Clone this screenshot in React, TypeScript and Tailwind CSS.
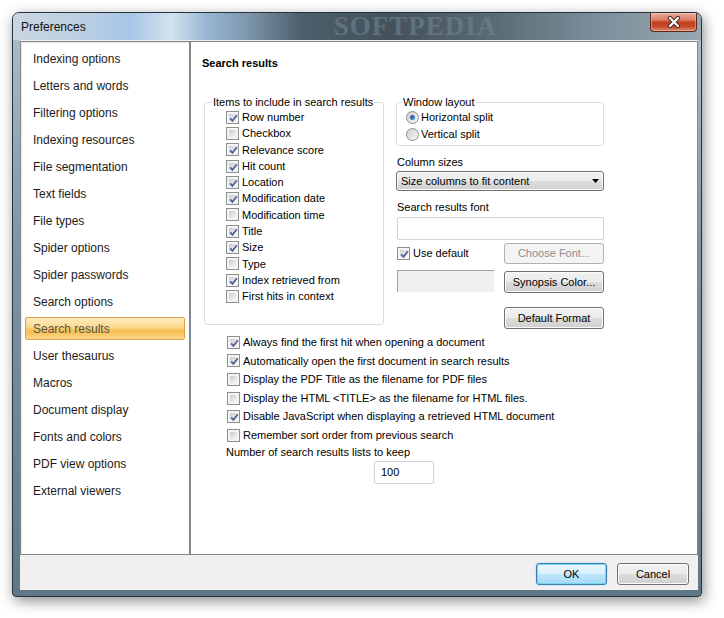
import React from "react";

const pages = [
  "Indexing options",
  "Letters and words",
  "Filtering options",
  "Indexing resources",
  "File segmentation",
  "Text fields",
  "File types",
  "Spider options",
  "Spider passwords",
  "Search options",
  "Search results",
  "User thesaurus",
  "Macros",
  "Document display",
  "Fonts and colors",
  "PDF view options",
  "External viewers",
];

const columns: [string, boolean][] = [
  ["Row number", true],
  ["Checkbox", false],
  ["Relevance score", true],
  ["Hit count", true],
  ["Location", true],
  ["Modification date", true],
  ["Modification time", false],
  ["Title", true],
  ["Size", true],
  ["Type", false],
  ["Index retrieved from", true],
  ["First hits in context", false],
];

const options: [string, boolean][] = [
  ["Always find the first hit when opening a document", true],
  ["Automatically open the first document in search results", true],
  ["Display the PDF Title as the filename for PDF files", false],
  ["Display the HTML <TITLE> as the filename for HTML files.", false],
  ["Disable JavaScript when displaying a retrieved HTML document", true],
  ["Remember sort order from previous search", false],
];

function Box({ checked }: { checked?: boolean }) {
  return (
    <span className="relative inline-block h-[13px] w-[13px] shrink-0 border border-[#8e8f8f] bg-[#f4f4f4] p-[2px]">
      <span className="block h-full w-full bg-linear-to-br from-[#cbcbcb] via-[#e2e2e2] to-[#f7f7f7]" />
      {checked && (
        <svg className="absolute left-[1px] top-[1px]" width="11" height="11" viewBox="0 0 11 11">
          <path d="M2.2 5.4 L4.4 7.9 L8.9 2.3" fill="none" stroke="#4b629b" strokeWidth="1.8" />
        </svg>
      )}
    </span>
  );
}

function Radio({ on }: { on?: boolean }) {
  return (
    <span className="relative inline-block h-[13px] w-[13px] shrink-0 rounded-full border border-[#8e8f8f] bg-linear-to-br from-[#cfcfcf] to-[#f7f7f7]">
      {on && (
        <span className="absolute left-[3px] top-[3px] h-[5px] w-[5px] rounded-full bg-linear-to-br from-[#15437f] to-[#5fa0e2]" />
      )}
    </span>
  );
}

function Btn({ children, disabled }: { children: React.ReactNode; disabled?: boolean }) {
  if (disabled) {
    return (
      <div className="flex h-[21px] w-[100px] items-center justify-center rounded-[3px] border border-[#adb2b5] bg-[#f4f4f4] text-[#8d8d8d]">
        {children}
      </div>
    );
  }
  return (
    <div className="flex h-[22px] w-[100px] items-center justify-center rounded-[3px] border border-[#707070] bg-[linear-gradient(#f2f2f2_0%,#ebebeb_50%,#dddddd_51%,#cfcfcf_100%)] shadow-[inset_0_0_0_1px_#fbfbfb]">
      {children}
    </div>
  );
}

export default function App() {
  return (
    <div className="min-h-screen w-full bg-white pl-[12px] pt-[12px] font-[family-name:'Liberation_Sans',Arial,sans-serif] text-[11px] text-black">
      <div className="flex h-[585px] w-[690px] flex-col rounded-t-[7px] rounded-b-[4px] border border-[#27343d] bg-[linear-gradient(180deg,#aebfcb_0%,#7d95a5_40%,#5f7888_100%)] pb-[6px] pl-[7px] pr-[3px] shadow-[2px_4px_14px_rgba(0,0,0,0.45)]">
        {/* glass title bar */}
        <div className="-ml-[7px] -mr-[3px] flex h-[27px] rounded-t-[6px] bg-[linear-gradient(90deg,#c9d6e1_0%,#bccfe2_10%,#a6c5e6_17%,#d3e2ef_23%,#9ab8d4_28%,#7e97ac_34%,#4d5e6a_42%,#43525c_55%,#5b6b75_70%,#7c8e9a_85%,#98a8b2_100%)]">
          <span className="self-center pl-[8px] pt-[1px] text-[12px] text-[#111]">Preferences</span>
          <span className="ml-[248px] self-center font-['Liberation_Serif',serif] text-[27px] font-bold leading-none tracking-[1px] text-[#71848f] opacity-60">
            SOFTPEDIA
          </span>
          <div className="ml-auto mr-[4px] flex h-[19px] w-[47px] items-center justify-center rounded-b-[4px] border border-t-0 border-[#5b251c] bg-[linear-gradient(#eab09f_0%,#d97a63_40%,#c2401f_50%,#c24a2c_75%,#dc8c6f_100%)] shadow-[inset_0_0_0_1px_rgba(255,210,200,0.45)]">
            <svg width="16" height="12" viewBox="0 0 16 12">
              <path d="M4 2 L12 10 M12 2 L4 10" stroke="#4a2018" strokeWidth="4.2" strokeLinecap="round" />
              <path d="M4 2 L12 10 M12 2 L4 10" stroke="#ffffff" strokeWidth="2.4" strokeLinecap="round" />
            </svg>
          </div>
        </div>

        {/* client area */}
        <div className="flex flex-1 flex-col bg-[#f0f0f0] pt-[1px]">
          <div className="flex h-[514px]">
            <div className="w-[170px] border border-[#828790] bg-white pt-[3px] shadow-[inset_1px_1px_0_#e8e8e8]">
              {pages.map((p) => {
                const sel = p === "Search results";
                return (
                  <div key={p} className="h-[27px] px-[4px] py-[2px]">
                    <div
                      className={
                        sel
                          ? "flex h-full items-center rounded-[2px] border border-[#dca24c] bg-[linear-gradient(#fdebbd_0%,#fcdc93_40%,#f8bd4f_62%,#fac96a_80%,#fcd98e_100%)] pl-[7px] text-[12px] text-[#555]"
                          : "flex h-full items-center pl-[8px] text-[12px] text-[#1b1b1b]"
                      }
                    >
                      {p}
                    </div>
                  </div>
                );
              })}
            </div>

            <div className="flex flex-1 flex-col border border-[#828790] bg-white">
              <div className="pl-[11px] pt-[15px] text-[11px] font-bold leading-[13px]">Search results</div>

              <div className="mt-[26px] flex gap-[12px] pl-[13px]">
                <fieldset className="h-[229px] w-[180px] rounded-[3px] border border-[#d5dfe5]">
                  <legend className="ml-[7px] px-[1px] leading-[13px]">Items to include in search results</legend>
                  <div className="flex flex-col pl-[21px]">
                    {columns.map(([label, on]) => (
                      <div key={label} className="flex h-[16.3px] items-center gap-[3px]">
                        <Box checked={on} />
                        <span>{label}</span>
                      </div>
                    ))}
                  </div>
                </fieldset>

                <div className="flex w-[208px] flex-col">
                  <fieldset className="h-[50px] rounded-[3px] border border-[#d5dfe5]">
                    <legend className="ml-[5px] px-[1px] leading-[13px]">Window layout</legend>
                    <div className="flex flex-col pl-[9px]">
                      <div className="flex h-[17px] items-center gap-[2px]">
                        <Radio on />
                        <span>Horizontal split</span>
                      </div>
                      <div className="flex h-[17px] items-center gap-[2px]">
                        <Radio />
                        <span>Vertical split</span>
                      </div>
                    </div>
                  </fieldset>

                  <div className="mt-[10px] pl-[1px] leading-[13px]">Column sizes</div>
                  <div className="mt-[2px] flex h-[20px] items-center justify-between rounded-[3px] border border-[#707070] bg-[linear-gradient(#f2f2f2_0%,#ebebeb_50%,#dddddd_51%,#cfcfcf_100%)] pl-[4px] pr-[4px] shadow-[inset_0_0_0_1px_#fbfbfb]">
                    <span>Size columns to fit content</span>
                    <svg width="7" height="4" viewBox="0 0 7 4">
                      <path d="M0 0 H7 L3.5 4 Z" fill="#000" />
                    </svg>
                  </div>

                  <div className="mt-[10px] pl-[1px] leading-[13px]">Search results font</div>
                  <div className="ml-[1px] mt-[3px] h-[23px] rounded-[2px] border border-[#cfd3d8] bg-white" />

                  <div className="mt-[3px] flex items-center justify-between pl-[1px]">
                    <div className="flex items-center gap-[3px]">
                      <Box checked />
                      <span>Use default</span>
                    </div>
                    <Btn disabled>Choose Font...</Btn>
                  </div>

                  <div className="mt-[6px] flex items-start justify-between pl-[1px]">
                    <div className="h-[22px] w-[97px] border-l border-t border-[#a0a0a0] bg-[#f0f0f0]" />
                    <div className="mt-[1px]">
                      <Btn>Synopsis Color...</Btn>
                    </div>
                  </div>

                  <div className="mt-[14px] flex justify-end">
                    <Btn>Default Format</Btn>
                  </div>
                </div>
              </div>

              <div className="mt-[4px] flex flex-col pl-[35px]">
                {options.map(([label, on]) => (
                  <div key={label} className="flex h-[18.6px] items-center gap-[3px] pl-[1px]">
                    <Box checked={on} />
                    <span>{label}</span>
                  </div>
                ))}
                <div className="flex h-[16px] items-center">Number of search results lists to keep</div>
                <div className="ml-[148px] flex h-[23px] w-[60px] items-center rounded-[2px] border border-[#cfd3d8] bg-white pl-[6px]">
                  100
                </div>
              </div>
            </div>
          </div>

          <div className="flex flex-1 items-start justify-end gap-[10px] pr-[9px] pt-[8px]">
            <div className="flex h-[22px] w-[71px] items-center justify-center rounded-[3px] border border-[#3c7fb1] bg-[linear-gradient(#eaf6fd_0%,#d9f0fc_50%,#bee6fd_51%,#a7d9f5_100%)] shadow-[inset_0_0_0_1px_#78d4f7,0_0_2px_#8fd3f5]">
              OK
            </div>
            <div className="flex h-[22px] w-[72px] items-center justify-center rounded-[3px] border border-[#707070] bg-[linear-gradient(#f2f2f2_0%,#ebebeb_50%,#dddddd_51%,#cfcfcf_100%)] shadow-[inset_0_0_0_1px_#fbfbfb]">
              Cancel
            </div>
          </div>
        </div>
      </div>
    </div>
  );
}
